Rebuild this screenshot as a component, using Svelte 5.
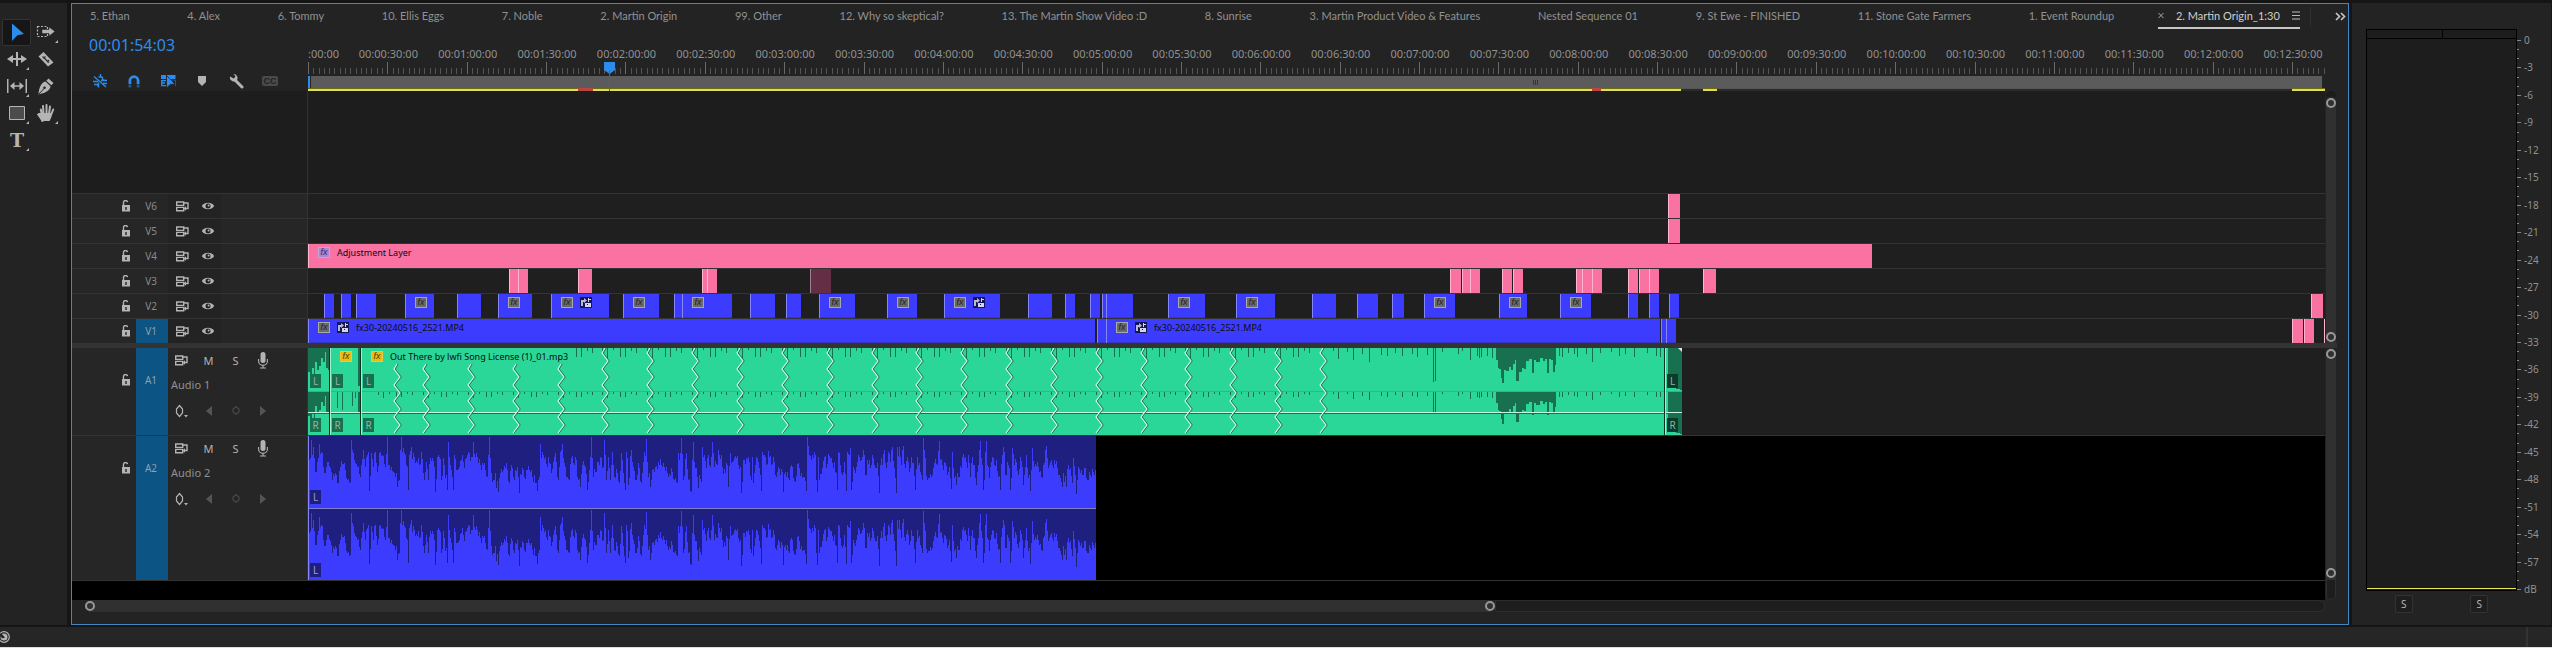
<script>
  // Timeline positions are in units from the start of the sequence; SPAN units fill the lane.
  const SPAN = 2017;
  const STEP = 79.36; // thirty seconds
  const pct = (v) => (v / SPAN) * 100 + '%';

  const tabs = [
    '5. Ethan', '4. Alex', '6. Tommy', '10. Ellis Eggs', '7. Noble', '2. Martin Origin', '99. Other',
    '12. Why so skeptical?', '13. The Martin Show Video :D', '8. Sunrise',
    '3. Martin Product Video & Features', 'Nested Sequence 01', '9. St Ewe - FINISHED',
    '11. Stone Gate Farmers', '1. Event Roundup'
  ];

  const labels = Array.from({ length: 25 }, (_, i) => {
    const m = String(Math.floor((i + 1) / 2)).padStart(2, '0');
    return { x: (i + 1) * STEP + 1, text: `00:${m}:${i % 2 ? '00' : '30'}:00` };
  });
  const ticks = Array.from({ length: 382 }, (_, i) => ({ x: Math.round((i * STEP) / 15), major: i % 15 === 0 }));

  const rendered = [[0, 1373], [1395, 1409], [1984, 2017]];
  const unrendered = [[270, 285], [1284, 1293]];

  // clip: [start, end, kind, badges, name]
  const B = 'blue', P = 'pink';
  const videoTracks = [
    { id: 'V6', clips: [[1360, 1372, P]] },
    { id: 'V5', clips: [[1360, 1372, P]] },
    { id: 'V4', clips: [[0, 1564, P, 'f', 'Adjustment Layer']] },
    { id: 'V3', clips: [[201, 209, P], [210, 215, P], [270, 284, P], [394, 398, P], [399, 407, P],
      [502, 523, 'muted'], [1142, 1153, P], [1154, 1161, P], [1162, 1172, P], [1194, 1204, P], [1205, 1209, P],
      [1268, 1273, P], [1274, 1283, P], [1284, 1292, P], [1320, 1330, P], [1331, 1340, P], [1341, 1345, P],
      [1395, 1408, P]] },
    { id: 'V2', clips: [[16, 20, B], [33, 39, B], [48, 68, B], [97, 126, B, 'f'], [149, 173, B], [190, 224, B, 'f'],
      [243, 301, B, 'fn'], [315, 351, B, 'f'], [366, 369, B], [374, 424, B, 'f'], [442, 467, B], [478, 493, B],
      [511, 547, B, 'f'], [579, 609, B, 'f'], [636, 692, B, 'fn'], [720, 744, B], [757, 761, B], [782, 786, B],
      [794, 797, B], [798, 825, B], [860, 897, B, 'f'], [928, 967, B, 'f'], [1004, 1028, B], [1049, 1070, B],
      [1084, 1096, B], [1116, 1147, B, 'f'], [1191, 1219, B, 'f'], [1252, 1283, B, 'f'], [1320, 1329, B],
      [1341, 1345, B], [1361, 1366, B], [2003, 2015, P]] },
    { id: 'V1', target: true, clips: [[0, 787, B, 'fn', 'fx30-20240516_2521.MP4'], [789, 797, B],
      [798, 1352, B, 'fn', 'fx30-20240516_2521.MP4'], [1353, 1357, B], [1358, 1362, B],
      [1984, 1995, P], [1996, 2002, P], [2016, 2017, P]] }
  ];

  const zigs = [89, ...Array.from({ length: 21 }, (_, i) => Math.round(118 + i * 44.85))];
  // Music transients: [x, depth]
  const hits = [];
  for (let z = 73.15; z < 1010; z += 44.85) {
    for (const [dx, d] of [[-3, 5], [2, 10], [8, 2], [15, 9], [20, 9], [26, 3], [31, 5]]) hits.push([Math.round(z + dx), d]);
  }
  const tail = [129,3,142,11,165,4,179,12,200,6,217,14,248,7,263,8,282,5,300,8,323,6,336,9,360,7,375,34,380,33,398,4,435,6,447,3,
    465,12,483,8,487,10,492,9,506,8,520,10,683,8,691,9,705,5,720,6,728,9,750,6,765,14,785,5,810,4,831,8,845,6,868,9,900,5,922,8,932,9];
  for (let i = 0; i < tail.length; i += 2) hits.push([Math.round(972 + tail[i] / 2.45), tail[i + 1]]);

  const loud = [529,12,533,20,537,21,541,30,545,35,549,22,553,23,560,19,565,22,570,16,575,12,579,33,583,33,586,24,592,20,598,21,
    603,13,610,11,617,25,622,12,628,14,636,10,645,13,650,11,655,25,660,11,664,12,669,24,673,17];
  const intro = [0,24,2,28,4,20,6,26,7,14,9,22,11,18,13,10,15,14,17,4,18,20,20,22,21,4];

  function hang(list, top, map, scale = 1) {
    let d = `M${map(list[0])} ${top}`;
    for (let i = 0; i < list.length; i += 2) {
      const next = i + 2 < list.length ? map(list[i + 2]) : map(list[i]) + 1;
      d += `V${top + Math.round(list[i + 1] * scale)}H${next}`;
    }
    return d + `V${top}Z`;
  }
  const tailX = (v) => Math.round(972 + v / 2.45);
  const same = (v) => v;
  const hitPath = (top, min, k) =>
    hits.filter(([x]) => x >= min).map(([x, d]) => `M${x} ${top}h1v${Math.max(2, Math.round(d * k))}h-1z`).join('');
  function zig(x, y0) {
    let d = `M${x} ${y0}`, side = -3;
    for (let y = y0 + 5; y < 88; y += 8) { d += `L${x + side} ${y}`; side = -side; }
    return d;
  }

  // Voice waveform as x,y pairs sampled along the clip, in thirds of a unit.
  const voiceA = [27,540,33,480,38,500,45,575,52,545,58,492,64,515,70,560,75,580,80,545,85,545,90,565,97,600,105,580,112,610,120,560,
    128,552,135,570,142,600,150,605,154,480,160,520,165,548,172,560,180,590,188,510,195,560,203,515,208,632,213,518,218,560,225,515,
    232,575,238,520,247,525,255,560,260,470,265,555,272,560,278,575,284,590,290,622,296,600,300,510,304,472,308,505,313,520,320,560,
    323,630,328,525,334,500,340,518,346,548,352,548,358,555,364,515,372,600,378,545,384,600,390,535,397,535,403,560,406,635,412,530,
    418,530,424,600,430,535,440,630,443,485,447,530,453,570,458,630,463,525,470,570,478,560,485,525,492,565,500,525,506,520,512,530,
    520,485,526,530,532,530,540,555,548,555,555,570,561,590,566,468,572,580,580,600,587,625,595,635,600,580,610,570,618,550,626,610,
    632,555,640,590,650,560,658,638,665,565,672,590,680,570,690,575,697,590,704,610,710,632,716,590,720,492,726,515,735,530,740,560,
    745,530,752,580,758,545,765,520,771,590,775,600,780,515,787,492,793,550,800,590,806,600,812,535,820,550,827,540,833,600,840,620,
    846,555,855,560,861,630,868,570,873,468,878,590,885,575,895,545,903,535,908,560,912,480,918,600,924,530,930,600,937,515,943,590,
    950,580,958,610,963,520,969,580,975,630,979,515,985,615,992,510,1000,560,1008,600,1015,550,1022,610,1030,545,1037,478,1043,590,
    1050,620,1055,570,1065,560,1075,545,1085,560,1097,560,1105,590,1115,575,1122,600,1130,610,1135,520,1142,475,1150,600,1158,520,
    1165,600,1170,632];
  const voiceB = [2,200,8,50,12,110,18,130,25,190,32,170,37,65,42,90,48,130,54,90,60,125,67,50,73,125,80,120,85,75,92,90,97,125,104,145,
    110,120,115,185,119,85,125,110,132,100,138,100,145,120,150,125,154,205,160,105,168,98,175,95,182,165,187,95,190,175,197,95,203,110,
    208,130,214,198,217,80,222,90,228,120,235,78,242,120,250,95,257,155,264,125,270,150,277,140,280,200,286,140,295,160,302,120,310,160,
    316,170,322,118,328,130,335,160,340,155,347,198,350,36,353,62,358,90,365,90,370,100,375,90,380,200,384,97,388,165,396,130,403,95,
    408,130,414,88,420,100,426,115,433,110,440,195,445,80,450,120,457,150,463,110,467,198,472,80,478,90,481,70,484,195,490,125,496,145,
    502,110,508,95,514,105,520,75,526,150,532,105,540,130,546,90,550,98,556,130,562,115,566,203,572,100,576,120,582,75,588,130,595,80,
    600,110,606,65,612,130,617,203,622,65,626,65,632,120,638,62,644,130,650,95,657,140,662,95,668,115,676,195,680,95,686,115,692,150,
    697,165,700,40,704,100,710,165,718,158,726,150,733,115,740,120,746,48,750,105,757,120,764,115,770,150,776,125,782,192,785,80,790,130,
    797,180,804,155,812,130,817,95,824,95,830,130,835,90,840,155,846,95,852,120,857,180,864,120,871,48,875,120,880,195,887,48,892,120,
    898,160,905,95,911,120,917,105,924,155,930,195,935,90,940,65,946,150,952,110,958,130,961,195,967,70,972,120,978,110,985,150,990,95,
    995,125,1000,180,1007,90,1014,160,1020,198,1025,70,1032,125,1040,110,1048,140,1055,160,1060,120,1069,62,1074,130,1080,110,1086,120,
    1093,105,1100,130,1107,150,1115,185,1120,145,1128,185,1133,120,1140,130,1146,175,1150,100,1155,150,1159,208,1163,125,1170,145,
    1178,150,1185,130,1192,165,1200,150,1208,140,1214,135];

  const samples = [];
  for (let i = 0; i < voiceA.length; i += 2) samples.push([(voiceA[i] - 24) / 3, (voiceA[i + 1] - 468) / 3]);
  for (let i = 0; i < voiceB.length; i += 2) samples.push([382 + voiceB[i] / 3, (voiceB[i + 1] - 33) / 3]);
  // Between two samples the signal falls back to a jittered midpoint, so peaks stay one unit wide.
  const depth = new Array(788).fill(0);
  for (let i = 0; i < samples.length - 1; i++) {
    const [x0, y0] = samples[i], [x1, y1] = samples[i + 1];
    for (let x = Math.round(x0); x < Math.round(x1); x++) {
      const t = (x - x0) / (x1 - x0);
      const soft = Math.min(Math.max(y0 + (y1 - y0) * t, 19), 42);
      depth[x] = x === Math.round(x0) ? y0 : soft + (((x * 37) % 11) - 5);
    }
  }
  depth[0] = 24;
  depth[787] = 34;
  const voicePath = (top) => {
    let d = `M0 ${top}`;
    depth.forEach((v, x) => { if (x < 788) d += `V${top + Math.max(1, Math.round(v))}H${x + 1}`; });
    return d + `V${top}Z`;
  };

  const channels = [
    { x: 2, y: 26, t: 'L' }, { x: 24, y: 26, t: 'L' }, { x: 55, y: 26, t: 'L' }, { x: 1359, y: 26, t: 'L', deep: true },
    { x: 2, y: 70, t: 'R' }, { x: 24, y: 70, t: 'R' }, { x: 55, y: 70, t: 'R' }, { x: 1359, y: 70, t: 'R', deep: true }
  ];
  const db = Array.from({ length: 21 }, (_, i) => (i === 20 ? 'dB' : i === 0 ? '0' : String(-3 * i)));
  const dbTicks = Array.from({ length: 61 }, (_, i) => i);
</script>

{#snippet lock()}
  <svg width="10" height="12" viewBox="0 0 10 12"><path d="M2.5 6V2.8a2 2 0 0 1 4-.6" fill="none" stroke="#b4b4b4" stroke-width="1.4" /><path d="M1 5h8v6.500H1z" fill="#b4b4b4" /><path d="M4.300 7h1.400v3H4.300z" fill="#262626" /></svg>
{/snippet}
{#snippet sync()}
  <svg width="13" height="11" viewBox="0 0 13 11" fill="none" stroke="#b4b4b4" stroke-width="1.400"><path d="M.7 1h7v3.400h-7zM.7 6.400h7v3.400h-7z" /><path d="M7.700 2h4.300v5.500H9" /><path d="M10 5.200v4.500L7.600 7.500z" fill="#b4b4b4" stroke="none" /></svg>
{/snippet}
{#snippet eye()}
  <svg width="14" height="10" viewBox="0 0 14 10"><path d="M.8 5C3.500 .6 10.500 .6 13.200 5C10.500 9.400 3.500 9.400 .8 5z" fill="#b4b4b4" /><circle cx="7" cy="5" r="2.500" fill="#242424" /><circle cx="7.600" cy="4.600" r="1" fill="#b4b4b4" /></svg>
{/snippet}
{#snippet corner()}
  <path d="M27 21v3h-3z" fill="#b4b4b4" />
{/snippet}
{#snippet badges(kinds)}
  {#if kinds.includes('f')}<span class="fx">fx</span>{/if}
  {#if kinds.includes('n')}
    <svg class="nest" width="12" height="11" viewBox="0 0 12 11"><rect width="12" height="11" fill="#15155c" /><path d="M5 6h6v4H5z" fill="#d6d6e6" /><path d="M1 3h3V1l3 2.500L4 6V5H3v4H1z" fill="#b9b9cc" /><path d="M8 1h1v1h2v1H9v2H8z" fill="#d6d6e6" /><path d="M7 7h1v1H7z" fill="#15155c" /></svg>
  {/if}
{/snippet}

<div class="app">
  <div class="workspace">
    <aside class="tools" aria-label="Tools">
      <button class="on" aria-label="Selection Tool"><svg width="29" height="27"><path d="M10 4.500L22 15l-6.500 1.200L10 22z" fill="#2d8ceb" /></svg></button>
      <button aria-label="Track Select Forward Tool"><svg width="29" height="27"><path d="M6.500 7.500h10v10h-10z" fill="none" stroke="#b4b4b4" stroke-width="1.200" stroke-dasharray="2 1.500" /><path d="M11 10.500h7V8l6 4.500L18 17v-2.500h-7z" fill="#b4b4b4" stroke="#232323" stroke-width=".5" />{@render corner()}</svg></button>
      <button aria-label="Ripple Edit Tool"><svg width="29" height="27"><path d="M14 6h2v14h-2zM5 13l6-4v3h3v2h-3v3zM25 13l-6-4v3h-3v2h3v3z" fill="#b4b4b4" />{@render corner()}</svg></button>
      <button aria-label="Razor Tool"><svg width="29" height="27"><path d="M7.500 10.500l5-4.500L22.500 16.500l-5.500 4z" fill="#b4b4b4" /><path d="M11.500 10.500l6.500 6M12.500 12.500l2-2M16 16l2-2" stroke="#333" stroke-width="1.300" /></svg></button>
      <button aria-label="Slip Tool"><svg width="29" height="27"><path d="M5 6h1.500v14H5zM23.500 6H25v14h-1.500zM8 13l4.500-4v3.300h5V9l4.500 4-4.500 4v-3.300h-5V17z" fill="#b4b4b4" />{@render corner()}</svg></button>
      <button aria-label="Pen Tool"><svg width="29" height="27"><path d="M17.500 5.500l5 4.500-2.200 2.300-5-4.500zM14.500 8.500l5 4.800C19 18 14 20 7.500 21.500C8 15 10 9.500 14.500 8.500z" fill="#b4b4b4" /><path d="M8 21l5-5.500" stroke="#232323" /><circle cx="13.500" cy="14.800" r="1.300" fill="#232323" /></svg></button>
      <button aria-label="Rectangle Tool"><svg width="29" height="27"><path d="M7.500 6.500h15v13h-15z" fill="#4c4c4c" stroke="#b4b4b4" />{@render corner()}</svg></button>
      <button aria-label="Hand Tool"><svg width="29" height="27"><path d="M11.500 21c-1.500-3-3-4.500-4.300-6.500c.8-1 2.200-.6 3.800 1L9.800 9.500M12.500 14L12 6M15.500 14V5M18 14l1-7.500M20 15l2.200-5.500" fill="none" stroke="#b4b4b4" stroke-width="2" stroke-linecap="round" /><path d="M10.500 13h10.500c0 4-1.500 6-2.500 8h-7c-1-2-3-4-3-4z" fill="#b4b4b4" />{@render corner()}</svg></button>
      <button aria-label="Type Tool"><svg width="29" height="27"><text x="15" y="20" text-anchor="middle" class="tee">T</text>{@render corner()}</svg></button>
    </aside>

    <main class="timeline">
      <div class="tabbar">
        <nav>
          {#each tabs as t}<button class="tab">{t}</button>{/each}
          <button class="tab active">
            <svg width="6" height="7" viewBox="0 0 6 7"><path d="M.5 1l5 5M5.500 1l-5 5" stroke="#aaa" /></svg>
            <span>2. Martin Origin_1:30</span>
            <svg width="8" height="9" viewBox="0 0 8 9"><path d="M0 1h8M0 4.500h8M0 8h8" stroke="#bbb" /></svg>
          </button>
        </nav>
        <span class="sep"></span>
        <button class="more" aria-label="More sequences"><svg width="11" height="9" viewBox="0 0 11 9"><path d="M1 1l3.500 3.500L1 8M6 1l3.500 3.500L6 8" fill="none" stroke="#c4c4c4" stroke-width="1.700" /></svg></button>
      </div>

      <div class="head">
        <div class="controls">
          <div class="timecode">00:01:54:03</div>
          <div class="toolbar">
            <button aria-label="Insert as nest"><svg width="14" height="14" viewBox="0 0 14 14" fill="none" stroke="#2d8ceb"><path d="M1 2.500l12 10.500" stroke-width="1.300" /><path d="M7.500 0v3M5.500 3h4M9.500 3v3h2M8 6.500h6M0 7.500h5M1 10.500h4v2M5.500 8.500v5M10 9.500h4" stroke-width="1.400" /></svg></button>
            <button aria-label="Snap"><svg width="12" height="13" viewBox="0 0 12 13" fill="none" stroke="#2d8ceb" stroke-width="2.800"><path d="M1.900 9V5.800a4.100 4.100 0 0 1 8.200 0V9" /><path d="M1.900 9.500v3M10.100 9.500v3" stroke="#1c5a96" /></svg></button>
            <button aria-label="Linked selection"><svg width="15" height="14" viewBox="0 0 15 14"><path d="M0 1h5v4H0zM6 1h8.500v4H6z" fill="#2d8ceb" /><path d="M5 6.700H.7v5H5M1 9h3" fill="none" stroke="#2d8ceb" stroke-width="1.300" /><path d="M10 6h4.500v6" fill="none" stroke="#1c5a96" /><path d="M5.500 1.500l8.500 8.500-4.700.5-3.800 3.500z" fill="#2d8ceb" stroke="#232323" stroke-width=".8" /></svg></button>
            <button aria-label="Add marker"><svg width="8" height="10" viewBox="0 0 8 10"><path d="M0 0h8v6L4 10 0 6z" fill="#b4b4b4" /></svg></button>
            <button aria-label="Timeline display settings"><svg width="15" height="15" viewBox="0 0 15 15"><path d="M6 6l7 7" stroke="#b4b4b4" stroke-width="3" stroke-linecap="round" /><path d="M1 2.500a4 4 0 0 0 7 3.500a4 4 0 0 0-3.500-6l2 2.500-1.700 2z" fill="#b4b4b4" /></svg></button>
            <button aria-label="Captions"><span class="cc">CC</span></button>
          </div>
        </div>
        <div class="ruler">
          <div class="labels"><span class="first">:00:00</span>{#each labels as l}<span style:left={pct(l.x)}>{l.text}</span>{/each}</div>
          <svg class="ticks" viewBox="0 0 {SPAN} 14" preserveAspectRatio="none" shape-rendering="crispEdges">
            {#each ticks as t}<rect x={t.x} y={t.major ? 0 : 6} width="1" height={t.major ? 12 : 6} fill={t.major ? '#6a6a6a' : '#555'} />{/each}
          </svg>
          <div class="workarea"><i></i><b></b></div>
          <div class="render">
            {#each rendered as [a, z]}<span class="ok" style:left={pct(a)} style:width={pct(z - a)}></span>{/each}
            {#each unrendered as [a, z]}<span class="bad" style:left={pct(a)} style:width={pct(z - a)}></span>{/each}
          </div>
          <svg class="playhead" style:left={pct(301)} width="11" height="29" viewBox="0 0 11 29"><path d="M0 0h11v8l-5.500 4L0 8z" fill="#2d8ceb" /><path d="M5 9h1v20H5z" fill="#2d6cab" /></svg>
        </div>
        <div></div>
      </div>

      <section class="area video">
        <div class="rows">
          <div class="row empty"><div class="blank"></div><div></div></div>
          {#each videoTracks as t}
            <div class="row v">
              <div class="th">
                <button class="lock" aria-label="Lock {t.id}">{@render lock()}</button>
                <button class="id" class:target={t.target}>{t.id}</button>
                <div class="vicons">
                  <button aria-label="Sync lock {t.id}">{@render sync()}</button>
                  <button aria-label="Show {t.id}">{@render eye()}</button>
                </div>
              </div>
              <div class="lane">
                {#each t.clips as [a, z, kind, kinds, name]}
                  <div class="clip {kind}" style:left={pct(a)} style:width={pct(z - a)}>
                    {#if kinds}{@render badges(kinds)}{/if}
                    {#if name}<span class="name">{name}</span>{/if}
                  </div>
                {/each}
              </div>
            </div>
          {/each}
        </div>
        <div class="vbar"><em class="cap"></em><div class="thumb"><i></i><i></i></div></div>
      </section>

      <div class="divider"></div>

      <section class="area audio">
        <div class="rows">
          {#each [1, 2] as n}
            <div class="row a{n}">
              <div class="th">
                <button class="lock" aria-label="Lock A{n}">{@render lock()}</button>
                <button class="id target">A{n}</button>
                <div class="acontrols">
                  <div class="line">
                    <button aria-label="Sync lock A{n}">{@render sync()}</button>
                    <button class="ms">M</button>
                    <button class="ms">S</button>
                    <button aria-label="Record voice-over"><svg width="10" height="17" viewBox="0 0 10 17"><rect x="2.500" y="0" width="5" height="11" rx="2.500" fill="#b4b4b4" /><path d="M.6 7v2a4.400 4.400 0 0 0 8.800 0V7M5 13.500V16M2 16h6" fill="none" stroke="#b4b4b4" stroke-width="1.100" /></svg></button>
                  </div>
                  <div class="tname">Audio {n}</div>
                  <div class="line">
                    <button aria-label="Show keyframes"><svg width="13" height="14" viewBox="0 0 13 14"><path d="M4.500 1.500L7.500 5v4l-3 3.500-3-3.500V5z" fill="none" stroke="#b4b4b4" stroke-width="1.200" /><path d="M9 11h4l-2 2.500z" fill="#b4b4b4" /></svg></button>
                    <button aria-label="Previous keyframe"><svg width="6" height="10"><path d="M6 0v10L0 5z" fill="#555" /></svg></button>
                    <button aria-label="Add keyframe"><svg width="8" height="9" viewBox="0 0 8 9"><path d="M4 .7L7 3v3L4 8.300 1 6V3z" fill="none" stroke="#484848" stroke-width="1.200" /></svg></button>
                    <button aria-label="Next keyframe"><svg width="6" height="10"><path d="M0 0v10l6-5z" fill="#555" /></svg></button>
                  </div>
                </div>
              </div>
              <div class="lane">
                {#if n === 1}
                  <svg class="wave" viewBox="0 0 {SPAN} 87" preserveAspectRatio="none">
                    <g shape-rendering="crispEdges">
                      <rect width="1374" height="87" fill="#2ad698" />
                      <g fill="#17704f">
                        <path d={hang(intro, 0, same)} />
                        <path d={hang(intro, 44, same)} />
                        <path d="M50 0h3v38h-3zM52 38h1v49h-1zM50 44h2v22h-2zM29 44h1v16h-1zM34 44h1v18h-1zM44 44h1v14h-1zM47 44h1v6h-1z" />
                        <path d={hitPath(0, 265, 1)} />
                        <path d={hitPath(44, 54, 0.6)} />
                        <path d={hang(loud, 0, tailX)} />
                        <path d={hang(loud, 44, tailX, 0.9)} />
                        <path d="M1360 0h14v42l-8-2h-6zM1360 44h14v42l-8-2h-6z" />
                      </g>
                      <rect y="43" width="1374" height="1" fill="#699a86" />
                      <rect y="64" width="1374" height="1" fill="#c8f3e2" />
                      <rect y="65" width="1374" height="1" fill="#1a6f52" />
                      <rect x="21" width="1" height="87" fill="#0d2f24" /><rect x="22" width="1" height="87" fill="#a5ecd1" />
                      <rect x="52" width="1" height="87" fill="#0d2f24" /><rect x="53" width="1" height="87" fill="#a5ecd1" />
                      <rect x="1356" width="1" height="87" fill="#0d2f24" /><rect x="1357" width="1" height="87" fill="#a5ecd1" />
                    </g>
                    {#each zigs as x}
                      <path d={zig(x + 1, x < 290 ? 16 : 0)} fill="none" stroke="#17704f" stroke-width="1.200" />
                      <path d={zig(x, x < 290 ? 16 : 0)} fill="none" stroke="#dcfbef" stroke-width="1.100" />
                    {/each}
                    <path d="M1370 0h4v4z" fill="#e2e2e2" />
                  </svg>
                  {#each channels as c}<span class="ch" class:deep={c.deep} style:left={pct(c.x)} style:top="{c.y}px">{c.t}</span>{/each}
                  <div class="clip audioclip" style:left={pct(22)} style:width={pct(30)}>{@render badges('f')}</div>
                  <div class="clip audioclip" style:left={pct(53)} style:width={pct(1303)}>{@render badges('f')}<span class="name">Out There by lwfi Song License (1)_01.mp3</span></div>
                {:else}
                  <svg class="wave" viewBox="0 0 {SPAN} 144" preserveAspectRatio="none" shape-rendering="crispEdges">
                    <rect width="788" height="144" fill="#3c3cff" />
                    <path d={voicePath(0)} fill="#1f1f80" />
                    <path d={voicePath(73)} fill="#1f1f80" />
                    <rect y="72" width="788" height="1" fill="#8080c0" />
                    <rect width="1" height="144" fill="#8585f5" />
                  </svg>
                  <span class="ch navy" style:left={pct(2)} style:top="54px">L</span>
                  <span class="ch navy" style:left={pct(2)} style:top="127px">L</span>
                {/if}
              </div>
            </div>
          {/each}
          <div class="floor"></div>
        </div>
        <div class="vbar"><div class="thumb"><i></i><i></i></div><em class="end"></em></div>
      </section>

      <div class="hbar"><div class="hthumb"><i></i><i></i></div><div class="hrest"></div></div>
    </main>

    <aside class="meters" aria-label="Audio meters">
      <div class="meterbox">
        <div class="scalebox">
          <div class="clipping"><span></span><span></span></div>
          <div class="levels"></div>
        </div>
        <div class="solos"><button>S</button><button>S</button></div>
      </div>
      <div class="scale">
        {#each dbTicks as i}<i class:major={i % 3 === 0} style:top="{(i / 60) * 100}%"></i>{/each}
        {#each db as d, i}<span style:top="{(i / 20) * 100}%">{d}</span>{/each}
      </div>
    </aside>
  </div>
  <footer><svg width="11" height="12" viewBox="0 0 11 12"><circle cx="4" cy="6" r="5.300" fill="none" stroke="#b4b4b4" stroke-width="1.200" /><circle cx="4" cy="6" r="3.500" fill="#b4b4b4" /><path d="M-1 4.500L1 2l4 4.500-2.500 1z" fill="#262626" /></svg><span></span></footer>
</div>

<style>
  :global(body) { background: #151515; }
  .app { min-height: 100vh; box-sizing: border-box; display: flex; flex-direction: column; background: #151515; border-bottom: 1px solid #e4dcd6; font: 11px/16px "Noto Sans", "Open Sans", sans-serif; color: #919191; }
  button { appearance: none; border: 0; background: none; padding: 0; margin: 0; font: inherit; color: inherit; display: flex; align-items: center; justify-content: center; }
  svg { display: block; flex: none; }
  .workspace { flex: 1; display: flex; padding: 3px 1px 2px 0; }

  .tools { width: 67px; margin-right: 4px; box-sizing: border-box; background: #232323; padding: 16px 7px 0 2px; display: grid; grid-template-columns: 29px 29px; grid-auto-rows: 27px; align-content: start; }
  .tools .on { background: #161616; border-radius: 2px; box-shadow: inset 0 0 0 1px #333; }
  .tee { font: bold 19px "DejaVu Serif", serif; fill: #b4b4b4; }

  .timeline { flex: 1; min-width: 0; display: flex; flex-direction: column; background: #232323; border: 1px solid #4187c3; padding-bottom: 12px; }
  .tabbar { display: flex; height: 27px; }
  nav { flex: 1; min-width: 0; display: flex; justify-content: space-between; padding-left: 4px; }
  .tab { padding-left: 14px; white-space: nowrap; font-family: Lato, "Noto Sans", sans-serif; line-height: 24px; height: 25px; border-bottom: 2px solid transparent; box-sizing: border-box; }
  .tab.active { padding-left: 0; gap: 12px; color: #cfcfcf; border-color: #c6c6c6; }
  .sep { width: 1px; height: 20px; margin: 3px 23px 0 10px; background: #303030; }
  .more { width: 12px; height: 25px; margin-right: 2px; }

  .head, .area { display: grid; }
  .head { grid-template-columns: 236px minmax(0, 1fr) 23px; height: 60px; }
  .timecode { padding-left: 17px; height: 28px; font-size: 16px; line-height: 28px; color: #2d8ceb; }
  .controls { display: flex; flex-direction: column; justify-content: space-between; }
  .toolbar { display: flex; padding-left: 11px; height: 20px; }
  .toolbar button { width: 34px; }
  .cc { background: #4a4a4a; color: #232323; font: bold 9px/10px "Liberation Sans", sans-serif; width: 16px; text-align: center; border-radius: 2px; }
  .ruler { position: relative; padding-top: 15px; overflow: hidden; }
  .labels { position: relative; height: 16px; }
  .labels span { position: absolute; line-height: 15px; transform: translateX(-50%); }
  .labels .first { left: 0; transform: none; }
  .ticks { width: 100%; height: 14px; }
  .workarea { height: 12px; margin-right: 3px; background: #5b5b5b; border-left: 2px solid #2d8ceb; position: relative; }
  .workarea i { position: absolute; left: 0; top: 0; width: 1px; height: 12px; background: #232323; }
  .workarea b { position: absolute; left: 60.8%; top: 4px; width: 1px; height: 5px; background: #333; box-shadow: 2px 0 #333, 4px 0 #333; }
  .render { height: 3px; position: relative; background: linear-gradient(#555 1px, #2b2b2b 1px); }
  .render span { position: absolute; top: 0; height: 3px; background: linear-gradient(#6c6c10 1px, #dfdb62 1px); }
  .render .bad { background: #b8453f; }
  .playhead { position: absolute; top: 31px; transform: translateX(-5px); }

  .area { grid-template-columns: minmax(0, 1fr) 23px; background: #232323; }
  .video { flex: 1; }
  .rows { display: flex; flex-direction: column; }
  .row { display: grid; grid-template-columns: 236px minmax(0, 1fr); background: #1f1f1f; }
  .empty { flex: 1; background: #1d1d1d; }
  .blank { border-right: 1px solid #333; }
  .v { height: 25px; box-sizing: border-box; border-top: 1px solid #333; }
  .th { display: flex; background: #262626; border-right: 1px solid #333; }
  .lock { width: 64px; padding-left: 43px; box-sizing: border-box; }
  .id { width: 32px; font-size: 10px; color: #8a8a8a; }
  .v .id { padding-right: 2px; }
  .id.target { background: #0b5484; color: #8fa0ac; }
  .vicons { width: 53px; padding-left: 1px; box-sizing: border-box; display: flex; background: #232323; }
  .vicons button { width: 26px; }
  .lane { position: relative; overflow: hidden; }
  .clip { position: absolute; top: 0; bottom: 0; box-sizing: border-box; display: flex; align-items: flex-start; gap: 7px; padding: 3px 0 0 10px; overflow: hidden; color: #0c0c0c; font-size: 9px; line-height: 11px; white-space: nowrap; }
  .blue { background: #3c3cff; box-shadow: inset 1px 0 #8585f5, inset 0 -1px #3636c0; }
  .pink { background: #f972a2; box-shadow: inset 1px 0 #ffb4cf; }
  .muted { background: #642f44; box-shadow: inset 1px 0 #a0808c; }
  .fx { flex: none; width: 12px; height: 11px; box-sizing: border-box; border: 1px solid #a8a8a8; background: #6b6b6b; color: #222; font: italic 9px/8px "Liberation Sans", sans-serif; text-align: center; }
  .pink .fx { background: #a988d8; border-color: #c0a5e2; color: #3a2458; }
  .audioclip .fx { background: #e9bd17; border-color: #f0c63a; color: #4d3b00; }

  .divider { height: 5px; background: #333; margin-right: 11px; }
  .a1 { height: 88px; box-sizing: border-box; border-bottom: 1px solid #333; }
  .a2 { height: 145px; box-sizing: border-box; border-bottom: 1px solid #333; }
  .a2 .lane { background: #000; }
  .audio .th button.lock { align-items: flex-start; padding-top: 26px; }
  .audio .id { align-items: flex-start; padding: 24px 2px 0 0; }
  .line { display: flex; height: 25px; }
  .line button { width: 27px; }
  .ms { color: #b4b4b4; }
  .tname { padding-left: 3px; height: 25px; line-height: 23px; }
  .wave { width: 100%; height: 100%; }
  .ch { position: absolute; width: 11px; height: 14px; background: #17704f; color: #8fb5a5; font-size: 10px; line-height: 14px; text-align: center; }
  .ch.deep { background: #0d3a29; }
  .ch.navy { background: #1f1f80; color: #9a9ac8; }
  .floor { height: 19px; background: #000; }

  .vbar { display: flex; flex-direction: column; width: 10px; margin-left: 1px; }
  .thumb { flex: 1; display: flex; flex-direction: column; justify-content: space-between; background: #303030; padding: 1px 0; border-radius: 5px 5px 0 0; }
  .vbar i, .hthumb i { width: 10px; height: 10px; box-sizing: border-box; border: 2px solid #989898; border-radius: 50%; background: #303030; }
  .cap { height: 6px; background: #1b1b1b; border-radius: 5px 5px 0 0; }
  .end { height: 21px; background: #1d1d1d; border-radius: 0 0 5px 5px; box-shadow: inset 0 0 0 1px #303030; }
  .hbar { height: 12px; display: flex; margin-right: 23px; }
  .hthumb { margin-left: 13px; flex: 0 1 62.6%; display: flex; justify-content: space-between; align-items: center; background: #303030; border-radius: 6px; }
  .hrest { flex: 1; box-sizing: border-box; background: #1d1d1d; border: 1px solid #2d2d2d; border-radius: 0 6px 6px 0; }

  .meters { width: 199px; box-sizing: border-box; margin-left: 3px; background: #232323; padding: 26px 0 12px 14px; display: flex; font-size: 10px; }
  .meterbox { width: 151px; display: flex; flex-direction: column; }
  .scalebox { flex: 1; border: 1px solid #000; background: #1d1d1d; display: flex; flex-direction: column; }
  .clipping { height: 8px; display: grid; grid-template-columns: 1fr 1fr; border-bottom: 1px solid #000; }
  .clipping span + span { border-left: 1px solid #000; }
  .levels { flex: 1; border-bottom: 1px solid #ebe650; margin-bottom: 1px; }
  .solos { display: flex; justify-content: space-around; padding-top: 4px; }
  .solos button { width: 18px; height: 18px; box-sizing: border-box; border: 1px solid #333; border-radius: 2px; background: #1e1e1e; color: #b4b4b4; }
  .scale { position: relative; flex: 1; margin: 11px 0 24px; }
  .scale i { position: absolute; left: 0; width: 2px; height: 1px; background: #888; }
  .scale i.major { width: 4px; }
  .scale span { position: absolute; left: 7px; transform: translateY(-50%); }

  footer { height: 20px; background: #262626; display: flex; justify-content: space-between; align-items: center; }
  footer span { width: 2px; height: 20px; margin-right: 24px; background: #333; }
</style>
